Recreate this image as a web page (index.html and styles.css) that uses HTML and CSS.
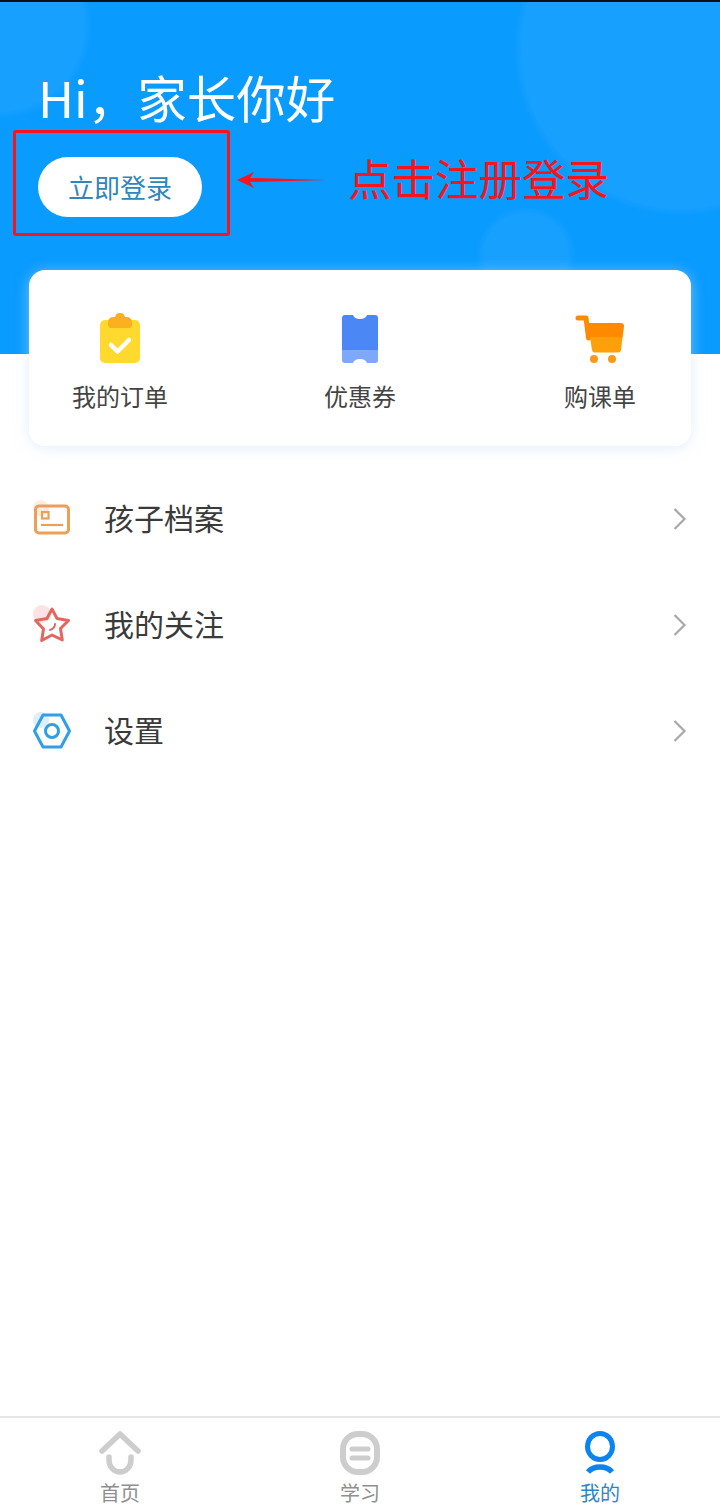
FILE: index.html
```html
<!DOCTYPE html>
<html lang="zh-CN">
<head>
    <meta charset="UTF-8">
    <meta name="viewport" content="width=device-width, initial-scale=1.0">
    <title>我的</title>
    <link rel="stylesheet" href="styles.css">
</head>
<body>
    <div class="page">
        <header class="hero">
            <span class="bubble bubble-left"></span>
            <span class="bubble bubble-right"></span>
            <span class="bubble bubble-low"></span>
            <h1>Hi，家长你好</h1>
            <a href="#" class="login-btn">立即登录</a>
        </header>

        <section class="quick-card">
            <a href="#" class="quick-item">
                <svg class="quick-icon" viewBox="0 0 50 50">
                    <rect x="5" y="7" width="40" height="43" rx="5" fill="#ffd92e"/>
                    <path d="M25 0a5 5 0 0 1 5 4h2a5 5 0 0 1 5 5v3a3 3 0 0 1-3 3H16a3 3 0 0 1-3-3V9a5 5 0 0 1 5-5h2a5 5 0 0 1 5-4z" fill="#fbb01f"/>
                    <path d="M16 32l6.500 6.500L34 27" fill="none" stroke="#fff" stroke-width="4.500" stroke-linecap="round" stroke-linejoin="round"/>
                </svg>
                <span>我的订单</span>
            </a>
            <a href="#" class="quick-item">
                <svg class="quick-icon" viewBox="0 0 50 50">
                    <path d="M10 2h8c1 2.500 3 4 7 4s6-1.500 7-4h8a3 3 0 0 1 3 3v32H7V5a3 3 0 0 1 3-3z" fill="#4c87f6"/>
                    <path d="M7 37h36v11a3 3 0 0 1-3 2h-8c-1-2.500-3-4-7-4s-6 1.500-7 4h-8a3 3 0 0 1-3-2z" fill="#7ea8fb"/>
                </svg>
                <span>优惠券</span>
            </a>
            <a href="#" class="quick-item">
                <svg class="quick-icon" viewBox="0 0 50 50">
                    <path d="M3 5h8l2.500 20" fill="none" stroke="#ff8a00" stroke-width="5" stroke-linecap="round" stroke-linejoin="round"/>
                    <path d="M13 10h33a3 3 0 0 1 3 3.500L47.500 25H15z" fill="#ff8a00"/>
                    <path d="M15 24h32.600L46 37a3 3 0 0 1-3 2.500H20a3 3 0 0 1-3-2.500z" fill="#ff9f0a"/>
                    <circle cx="19" cy="46" r="4" fill="#fb9a12"/>
                    <circle cx="37" cy="46" r="4" fill="#fb9a12"/>
                </svg>
                <span>购课单</span>
            </a>
        </section>

        <ul class="menu">
            <li class="menu-row">
                <svg class="menu-icon" viewBox="0 0 40 40">
                    <circle cx="9" cy="9" r="8" fill="#fdf0e2"/>
                    <rect x="3.500" y="7" width="33" height="27" rx="3.500" fill="none" stroke="#ec9f57" stroke-width="3"/>
                    <rect x="10" y="13" width="6.500" height="6.500" fill="none" stroke="#ec9f57" stroke-width="2.200"/>
                    <path d="M9 26h22" stroke="#ec9f57" stroke-width="2.200"/>
                </svg>
                <span class="menu-label">孩子档案</span>
                <svg class="chevron" viewBox="0 0 16 26"><path d="M2.500 3l10 10-10 10" fill="none" stroke="#a9a9a9" stroke-width="2.200"/></svg>
            </li>
            <li class="menu-row">
                <svg class="menu-icon" viewBox="0 0 40 40">
                    <circle cx="10" cy="9" r="9" fill="#fbe3e3"/>
                    <path d="M20 4l5 9.500 11.500 2-8 8 1.800 11.500L20 30l-10.300 5.500L11.500 24l-8-8.500 11.500-2z" fill="none" stroke="#e2685f" stroke-width="3" stroke-linejoin="round"/>
                    <path d="M23 19c0 3-2 5-5 6" fill="none" stroke="#e2685f" stroke-width="2" stroke-linecap="round"/>
                </svg>
                <span class="menu-label">我的关注</span>
                <svg class="chevron" viewBox="0 0 16 26"><path d="M2.500 3l10 10-10 10" fill="none" stroke="#a9a9a9" stroke-width="2.200"/></svg>
            </li>
            <li class="menu-row">
                <svg class="menu-icon" viewBox="0 0 40 40">
                    <circle cx="9" cy="9" r="8" fill="#deeffb"/>
                    <path d="M11 4h18l8.500 16L29 36H11L2.500 20z" fill="none" stroke="#2f9fe6" stroke-width="3" stroke-linejoin="round"/>
                    <circle cx="20" cy="20" r="6.500" fill="none" stroke="#2f9fe6" stroke-width="3"/>
                </svg>
                <span class="menu-label">设置</span>
                <svg class="chevron" viewBox="0 0 16 26"><path d="M2.500 3l10 10-10 10" fill="none" stroke="#a9a9a9" stroke-width="2.200"/></svg>
            </li>
        </ul>

        <nav class="tabbar">
            <a href="#" class="tab">
                <svg class="tab-icon" viewBox="0 0 44 44">
                    <path d="M4 20L22 3l18 17" fill="none" stroke="#cdcdcd" stroke-width="5.500" stroke-linecap="round" stroke-linejoin="round"/>
                    <path d="M11 26v3a11 12 0 0 0 22 0v-3" fill="none" stroke="#cdcdcd" stroke-width="5.500" stroke-linecap="round"/>
                </svg>
                <span>首页</span>
            </a>
            <a href="#" class="tab">
                <svg class="tab-icon" viewBox="0 0 44 44">
                    <rect x="5" y="3" width="34" height="38" rx="15" fill="none" stroke="#cdcdcd" stroke-width="6"/>
                    <path d="M14 18h16M14 27h16" stroke="#cdcdcd" stroke-width="5" stroke-linecap="round"/>
                </svg>
                <span>学习</span>
            </a>
            <a href="#" class="tab tab-active">
                <svg class="tab-icon" viewBox="0 0 44 44">
                    <ellipse cx="22" cy="15.500" rx="12.500" ry="13" fill="none" stroke="#0a84f0" stroke-width="5"/>
                    <path d="M10 41c3-3.500 7.500-5 12-5s9 1.500 12 5" fill="none" stroke="#0a84f0" stroke-width="5.500"/>
                </svg>
                <span>我的</span>
            </a>
        </nav>

        <!-- red markup drawn on top of the screenshot -->
        <div class="mark-box"></div>
        <svg class="mark-arrow" viewBox="0 0 90 20"><path d="M0 10l17-8-4 6 77 2-77 2 4 6z" fill="#f8141a"/></svg>
        <div class="mark-text">点击注册登录</div>
    </div>
</body>
</html>
```
FILE: styles.css
```css
* {
    box-sizing: border-box;
}

body {
    margin: 0;
    background-color: #fff;
    font-family: "Noto Sans CJK SC", "Noto Sans", sans-serif;
    color: #333;
}

a {
    text-decoration: none;
    color: inherit;
}

.page {
    position: relative;
    display: flex;
    flex-direction: column;
    height: 1511px;
    overflow: hidden;
}

.hero {
    position: relative;
    height: 354px;
    padding: 65px 38px 0;
    overflow: hidden;
    border-top: 2px solid #0b1016;
    background-color: #0a9bff;
}

.hero h1 {
    position: relative;
    margin: 0;
    font-size: 49.5px;
    font-weight: 400;
    line-height: 60px;
    color: #fff;
}

.bubble {
    position: absolute;
    border-radius: 50%;
    background-color: rgba(255, 255, 255, 0.06);
    filter: blur(3px);
}

.bubble-left {
    top: -65px;
    left: -90px;
    width: 178px;
    height: 178px;
}

.bubble-right {
    top: -116px;
    left: 518px;
    width: 326px;
    height: 326px;
}

.bubble-low {
    top: 208px;
    left: 480px;
    width: 92px;
    height: 92px;
}

.login-btn {
    position: relative;
    display: flex;
    align-items: center;
    justify-content: center;
    width: 164px;
    height: 60px;
    margin-top: 30px;
    padding-bottom: 2px;
    border-radius: 30px;
    background-color: #fff;
    color: #2f86bd;
    font-size: 26px;
}

.quick-card {
    position: relative;
    display: grid;
    grid-template-columns: repeat(3, 182px);
    justify-content: space-between;
    height: 176px;
    margin: -84px 29px 0;
    padding-top: 43px;
    border-radius: 16px;
    background-color: #fff;
    box-shadow: 0 2px 14px rgba(205, 225, 250, 0.55);
}

.quick-item {
    display: flex;
    flex-direction: column;
    align-items: center;
    gap: 16px;
    font-size: 24px;
    line-height: 34px;
    color: #444;
}

.quick-icon {
    width: 50px;
    height: 50px;
}

.menu {
    flex: 1;
    margin: 20px 0 0;
    padding: 0;
    list-style: none;
}

.menu-row {
    display: flex;
    align-items: center;
    gap: 32px;
    height: 106px;
    padding: 0 32px;
}

.menu-icon {
    flex: none;
    width: 40px;
    height: 40px;
}

.menu-label {
    flex: 1;
    padding-bottom: 4px;
    font-size: 30px;
    color: #3a3a3a;
}

.chevron {
    width: 16px;
    height: 26px;
}

.tabbar {
    display: grid;
    grid-template-columns: repeat(3, 1fr);
    height: 95px;
    padding-top: 13px;
    border-top: 2px solid #e6e6e6;
    background-color: #fff;
}

.tab {
    display: flex;
    flex-direction: column;
    align-items: center;
    font-size: 20px;
    line-height: 28px;
    color: #8f8f8f;
}

.tab-icon {
    width: 44px;
    height: 44px;
    margin-bottom: 4px;
}

.tab-active {
    color: #2a87c8;
}

.mark-box {
    position: absolute;
    top: 130px;
    left: 13px;
    width: 217px;
    height: 106px;
    border: 3px solid #f8141a;
    border-radius: 3px;
}

.mark-arrow {
    position: absolute;
    top: 170px;
    left: 237px;
    width: 90px;
    height: 20px;
}

.mark-text {
    position: absolute;
    top: 147px;
    left: 348px;
    font-size: 43.5px;
    line-height: 62px;
    color: #f8141a;
}
```
